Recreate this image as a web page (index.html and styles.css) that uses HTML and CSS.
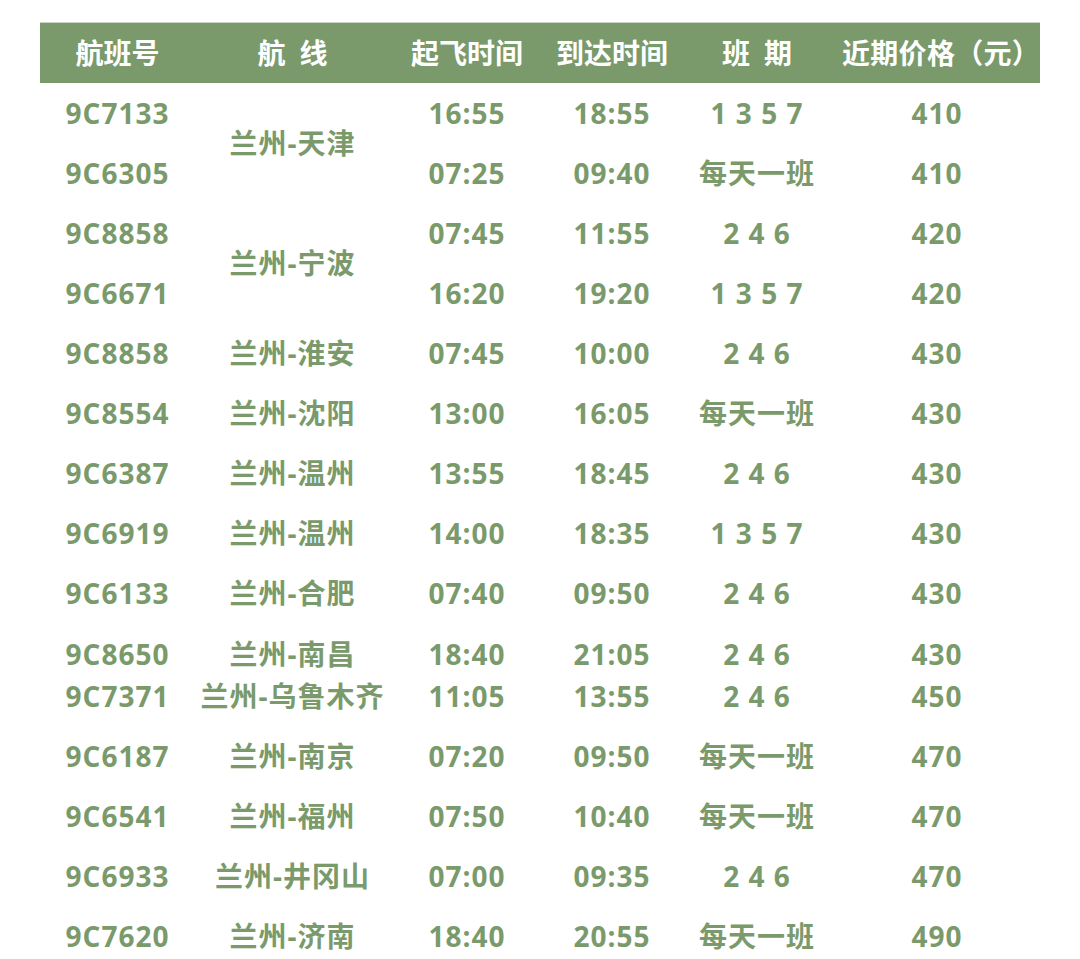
FILE: index.html
```html
<!DOCTYPE html>
<html lang="zh">
<head>
<meta charset="utf-8">
<link rel="stylesheet" href="styles.css">
</head>
<body>
<table class="flights">
  <colgroup>
    <col class="c1"><col class="c2"><col class="c3"><col class="c4"><col class="c5"><col class="c6">
  </colgroup>
  <thead>
    <tr><th>航班号</th><th>航&ensp;线</th><th>起飞时间</th><th>到达时间</th><th>班&ensp;期</th><th class="price-head">近期价格（元）</th></tr>
  </thead>
  <tbody>
    <tr><td>9C7133</td><td rowspan="2">兰州-天津</td><td>16:55</td><td>18:55</td><td>1 3 5 7</td><td>410</td></tr>
    <tr><td>9C6305</td><td>07:25</td><td>09:40</td><td>每天一班</td><td>410</td></tr>
    <tr><td>9C8858</td><td rowspan="2">兰州-宁波</td><td>07:45</td><td>11:55</td><td>2 4 6</td><td>420</td></tr>
    <tr><td>9C6671</td><td>16:20</td><td>19:20</td><td>1 3 5 7</td><td>420</td></tr>
    <tr><td>9C8858</td><td>兰州-淮安</td><td>07:45</td><td>10:00</td><td>2 4 6</td><td>430</td></tr>
    <tr><td>9C8554</td><td>兰州-沈阳</td><td>13:00</td><td>16:05</td><td>每天一班</td><td>430</td></tr>
    <tr><td>9C6387</td><td>兰州-温州</td><td>13:55</td><td>18:45</td><td>2 4 6</td><td>430</td></tr>
    <tr><td>9C6919</td><td>兰州-温州</td><td>14:00</td><td>18:35</td><td>1 3 5 7</td><td>430</td></tr>
    <tr><td>9C6133</td><td>兰州-合肥</td><td>07:40</td><td>09:50</td><td>2 4 6</td><td>430</td></tr>
    <tr class="r10"><td>9C8650</td><td>兰州-南昌</td><td>18:40</td><td>21:05</td><td>2 4 6</td><td>430</td></tr>
    <tr class="r11"><td>9C7371</td><td>兰州-乌鲁木齐</td><td>11:05</td><td>13:55</td><td>2 4 6</td><td>450</td></tr>
    <tr><td>9C6187</td><td>兰州-南京</td><td>07:20</td><td>09:50</td><td>每天一班</td><td>470</td></tr>
    <tr><td>9C6541</td><td>兰州-福州</td><td>07:50</td><td>10:40</td><td>每天一班</td><td>470</td></tr>
    <tr><td>9C6933</td><td>兰州-井冈山</td><td>07:00</td><td>09:35</td><td>2 4 6</td><td>470</td></tr>
    <tr><td>9C7620</td><td>兰州-济南</td><td>18:40</td><td>20:55</td><td>每天一班</td><td>490</td></tr>
  </tbody>
</table>
</body>
</html>
```
FILE: styles.css
```css
html, body {
  margin: 0;
  padding: 0;
  background: #ffffff;
}

body {
  padding: 22px 40px 0 40px;
  font-family: "Open Sans", "Noto Sans CJK SC", sans-serif;
  font-weight: 700;
  font-size: 28px;
  color: #7a9a6b;
}

.flights {
  width: 1000px;
  border-collapse: collapse;
  table-layout: fixed;
  white-space: pre;
}

.c1 { width: 155px; }
.c2 { width: 195px; }
.c3 { width: 154px; }
.c4 { width: 136px; }
.c5 { width: 154px; }
.c6 { width: 206px; }

.flights th {
  background: #7a9a6c;
  color: #ffffff;
  height: 60px;
  padding: 0;
  font-weight: 700;
  text-align: center;
  vertical-align: middle;
  line-height: 40px;
  border-top: 1px solid #c9d5c2;
}

.flights th.price-head {
  padding-left: 8px;
  letter-spacing: 0.3px;
}

.flights td {
  height: 60px;
  padding: 0;
  text-align: center;
  vertical-align: middle;
  line-height: 40px;
  letter-spacing: 1px;
}

.flights tr.r10 td {
  height: 43px;
  padding-top: 9px;
}

.flights tr.r11 td {
  height: 50px;
  padding-top: 1px;
  vertical-align: top;
}
```
